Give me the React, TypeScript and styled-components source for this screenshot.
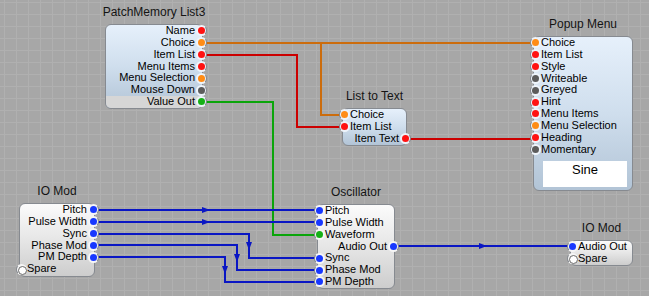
import styled, { createGlobalStyle } from 'styled-components';

const RH = 11.85;

type PortKind = 'red' | 'orange' | 'gray' | 'green' | 'blue' | 'white';
type Side = 'in' | 'out';
type Tone = 'blue' | 'grey';

interface PortRow {
  label: string;
  kind: PortKind;
  side: Side;
  band?: boolean;
}

interface NodeDef {
  title: string;
  x: number;
  y: number;
  w: number;
  tone: Tone;
  rows: PortRow[];
  padBottom?: number;
  display?: string;
}

const dotColors: Record<PortKind, string> = {
  red: '#ff1212',
  orange: '#ff8c16',
  gray: '#5c5c5c',
  green: '#16b016',
  blue: '#1838ff',
  white: '#ffffff',
};

const wireColors = {
  orange: '#cc6c0c',
  red: '#cc0000',
  green: '#0aa50a',
  blue: '#0a16c4',
};

const out = (label: string, kind: PortKind, band?: boolean): PortRow => ({ label, kind, side: 'out', band });
const inp = (label: string, kind: PortKind): PortRow => ({ label, kind, side: 'in' });

const nodes: Record<string, NodeDef> = {
  pm: {
    title: 'PatchMemory List3',
    x: 105,
    y: 24,
    w: 98,
    tone: 'blue',
    rows: [
      out('Name', 'red'),
      out('Choice', 'orange'),
      out('Item List', 'red'),
      out('Menu Items', 'red'),
      out('Menu Selection', 'orange'),
      out('Mouse Down', 'gray'),
      out('Value Out', 'green', true),
    ],
  },
  popup: {
    title: 'Popup Menu',
    x: 533,
    y: 36,
    w: 100,
    tone: 'blue',
    display: 'Sine',
    rows: [
      inp('Choice', 'orange'),
      inp('Item List', 'red'),
      inp('Style', 'red'),
      inp('Writeable', 'gray'),
      inp('Greyed', 'gray'),
      inp('Hint', 'red'),
      inp('Menu Items', 'red'),
      inp('Menu Selection', 'orange'),
      inp('Heading', 'red'),
      inp('Momentary', 'gray'),
    ],
  },
  lt: {
    title: 'List to Text',
    x: 342,
    y: 108,
    w: 65,
    tone: 'blue',
    rows: [inp('Choice', 'orange'), inp('Item List', 'red'), out('Item Text', 'red')],
  },
  iol: {
    title: 'IO Mod',
    x: 19,
    y: 203,
    w: 76,
    tone: 'grey',
    padBottom: 1,
    rows: [
      out('Pitch', 'blue'),
      out('Pulse Width', 'blue'),
      out('Sync', 'blue'),
      out('Phase Mod', 'blue'),
      out('PM Depth', 'blue'),
      inp('Spare', 'white'),
    ],
  },
  osc: {
    title: 'Oscillator',
    x: 317,
    y: 204,
    w: 78,
    tone: 'grey',
    rows: [
      inp('Pitch', 'blue'),
      inp('Pulse Width', 'blue'),
      inp('Waveform', 'green'),
      out('Audio Out', 'blue'),
      inp('Sync', 'blue'),
      inp('Phase Mod', 'blue'),
      inp('PM Depth', 'blue'),
    ],
  },
  ior: {
    title: 'IO Mod',
    x: 570,
    y: 240,
    w: 63,
    tone: 'grey',
    rows: [inp('Audio Out', 'blue'), inp('Spare', 'white')],
  },
};

interface WireDef {
  from: [string, number];
  to: [string, number];
  color: string;
  elbow?: number;
  arrow?: boolean;
}

const wires: WireDef[] = [
  { from: ['pm', 1], to: ['popup', 0], color: wireColors.orange },
  { from: ['pm', 1], to: ['lt', 0], color: wireColors.orange, elbow: 321 },
  { from: ['pm', 2], to: ['lt', 1], color: wireColors.red, elbow: 297 },
  { from: ['lt', 2], to: ['popup', 8], color: wireColors.red },
  { from: ['pm', 6], to: ['osc', 2], color: wireColors.green, elbow: 273 },
  { from: ['iol', 0], to: ['osc', 0], color: wireColors.blue, arrow: true },
  { from: ['iol', 1], to: ['osc', 1], color: wireColors.blue, arrow: true },
  { from: ['iol', 2], to: ['osc', 4], color: wireColors.blue, elbow: 249, arrow: true },
  { from: ['iol', 3], to: ['osc', 5], color: wireColors.blue, elbow: 237, arrow: true },
  { from: ['iol', 4], to: ['osc', 6], color: wireColors.blue, elbow: 225, arrow: true },
  { from: ['osc', 3], to: ['ior', 0], color: wireColors.blue, arrow: true },
];

function portPoint([id, i]: [string, number]) {
  const n = nodes[id];
  const row = n.rows[i];
  const x = row.side === 'in' ? n.x + 2 : n.x + n.w - 2;
  const y = Math.round(n.y + 1 + (i + 0.5) * RH);
  return { x, y };
}

function Wire({ def }: { def: WireDef }) {
  const a = portPoint(def.from);
  const b = portPoint(def.to);
  let pts: [number, number][];
  let arrow: string | null = null;
  if (def.elbow !== undefined) {
    const ex = def.elbow;
    pts = [
      [a.x, a.y],
      [ex, a.y],
      [ex, b.y],
      [b.x, b.y],
    ];
    const my = Math.round((a.y + b.y) / 2);
    arrow = `${ex - 3},${my - 4} ${ex + 3},${my - 4} ${ex},${my + 4}`;
  } else {
    pts = [
      [a.x, a.y],
      [b.x, a.y],
    ];
    const mx = Math.round((a.x + b.x) / 2);
    arrow = `${mx - 4},${a.y - 3} ${mx + 4},${a.y} ${mx - 4},${a.y + 3}`;
  }
  return (
    <g>
      <polyline
        points={pts.map((p) => p.join(',')).join(' ')}
        fill="none"
        stroke={def.color}
        strokeWidth={2}
        shapeRendering="crispEdges"
      />
      {def.arrow && arrow && <polygon points={arrow} fill={def.color} />}
    </g>
  );
}

function Node({ def }: { def: NodeDef }) {
  return (
    <NodeWrap style={{ left: def.x, top: def.y - 19, width: def.w }}>
      <Title>{def.title}</Title>
      <Box $tone={def.tone} $padBottom={def.padBottom ?? 0}>
        {def.rows.map((r) => (
          <Row key={r.label} $side={r.side} $band={!!r.band}>
            <Port $side={r.side} $tone={def.tone} $kind={r.kind} />
            <Label>{r.label}</Label>
          </Row>
        ))}
        {def.display && <Display>{def.display}</Display>}
      </Box>
    </NodeWrap>
  );
}

export default function App() {
  return (
    <>
      <GlobalStyle />
      <Canvas>
        <WireLayer width={649} height={296}>
          {wires.map((w, i) => (
            <Wire key={i} def={w} />
          ))}
        </WireLayer>
        {Object.entries(nodes).map(([id, n]) => (
          <Node key={id} def={n} />
        ))}
      </Canvas>
    </>
  );
}

const GlobalStyle = createGlobalStyle`
  html, body {
    margin: 0;
    padding: 0;
    background: #a7a7a7;
  }
  * {
    box-sizing: border-box;
  }
`;

const Canvas = styled.div`
  position: relative;
  width: 649px;
  height: 296px;
  overflow: hidden;
  background-color: #a7a7a7;
  background-image:
    linear-gradient(to right, #b0b0b0 1px, transparent 1px),
    linear-gradient(to bottom, #b0b0b0 1px, transparent 1px);
  background-size: 12px 12px;
  background-position: 4px 2px;
  font-family: 'Liberation Sans', Arial, sans-serif;
`;

const WireLayer = styled.svg`
  position: absolute;
  left: 0;
  top: 0;
  z-index: 0;
`;

const NodeWrap = styled.div`
  position: absolute;
  z-index: 1;
  display: flex;
  flex-direction: column;
  align-items: center;
`;

const Title = styled.div`
  height: 14px;
  line-height: 14px;
  margin-bottom: 5px;
  font-size: 12px;
  color: #141414;
  white-space: nowrap;
`;

const Box = styled.div<{ $tone: Tone; $padBottom: number }>`
  position: relative;
  width: 100%;
  border: 1px solid #868a90;
  border-radius: 6px;
  padding-bottom: ${({ $padBottom }) => $padBottom}px;
  background: ${({ $tone }) =>
    $tone === 'blue'
      ? 'linear-gradient(to bottom, #e6f0fb 0%, #cfdeed 50%, #b2c4d6 100%)'
      : 'linear-gradient(to bottom, #fbfbfb 0%, #e6e6e6 50%, #cdcdcd 100%)'};
`;

const Row = styled.div<{ $side: Side; $band: boolean }>`
  position: relative;
  height: ${RH}px;
  display: flex;
  align-items: center;
  justify-content: ${({ $side }) => ($side === 'in' ? 'flex-start' : 'flex-end')};
  padding: ${({ $side }) => ($side === 'in' ? '0 0 0 7px' : '0 7px 0 0')};
  background: ${({ $band }) => ($band ? '#d6d6d6' : 'transparent')};
  border-radius: ${({ $band }) => ($band ? '0 0 5px 5px' : '0')};
`;

const Label = styled.span`
  font-size: 11px;
  line-height: ${RH}px;
  color: #000;
  white-space: nowrap;
`;

const Port = styled.span<{ $side: Side; $tone: Tone; $kind: PortKind }>`
  position: absolute;
  top: calc(50% - 5.5px);
  ${({ $side }) => ($side === 'in' ? 'left: -4.5px;' : 'right: -4.5px;')}
  width: 11px;
  height: 11px;
  border-radius: 50%;
  border: 1px solid transparent;
  ${({ $side }) => ($side === 'in' ? 'border-left-color' : 'border-right-color')}: #868a90;
  background: ${({ $tone }) => ($tone === 'blue' ? '#eef4fb' : '#f6f6f6')};

  &::after {
    content: '';
    position: absolute;
    left: 1px;
    top: 1px;
    width: 7px;
    height: 7px;
    border-radius: 50%;
    background: ${({ $kind }) => dotColors[$kind]};
    border: ${({ $kind }) => ($kind === 'white' ? '1px solid #6a6a6a' : 'none')};
  }
`;

const Display = styled.div`
  margin: 6px 5px 3px 9px;
  height: 26px;
  padding-top: 1px;
  background: #ffffff;
  font-size: 13px;
  line-height: 15px;
  text-align: center;
  color: #000;
`;
